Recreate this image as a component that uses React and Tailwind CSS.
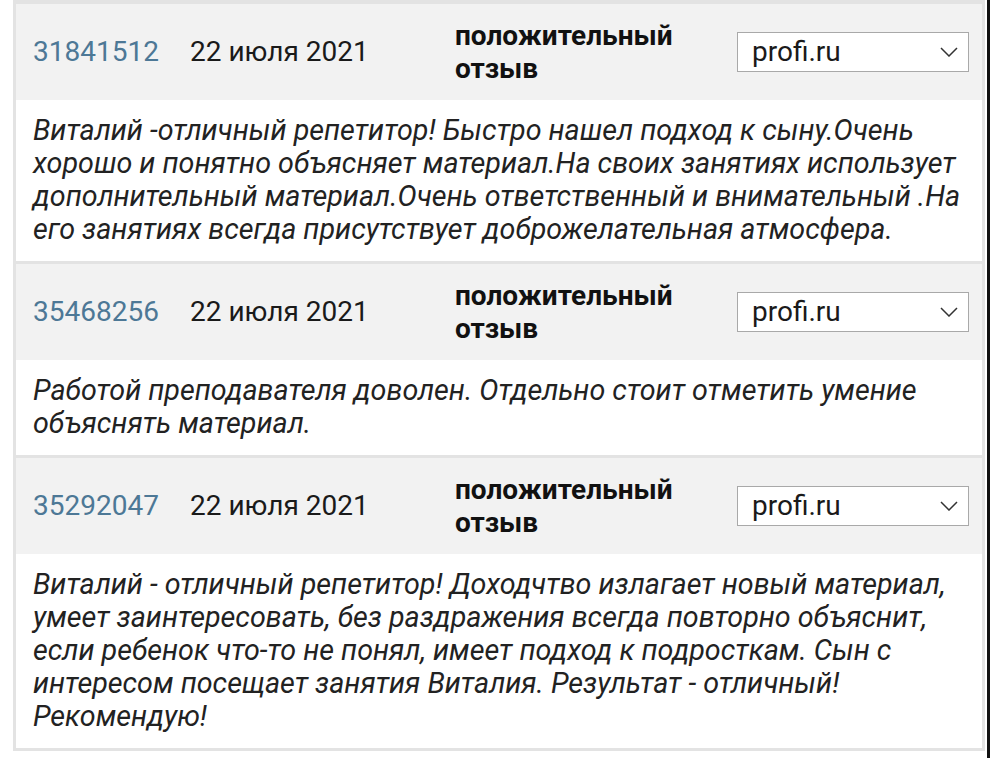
import React from "react";

const reviews = [
  {
    id: "31841512",
    date: "22 июля 2021",
    lines: [
      "Виталий -отличный репетитор! Быстро нашел подход к сыну.Очень",
      "хорошо и понятно объясняет материал.На своих занятиях использует",
      "дополнительный материал.Очень ответственный и внимательный .На",
      "его занятиях всегда присутствует доброжелательная атмосфера.",
    ],
  },
  {
    id: "35468256",
    date: "22 июля 2021",
    lines: [
      "Работой преподавателя доволен. Отдельно стоит отметить умение",
      "объяснять материал.",
    ],
  },
  {
    id: "35292047",
    date: "22 июля 2021",
    lines: [
      "Виталий - отличный репетитор! Доходчтво излагает новый материал,",
      "умеет заинтересовать, без раздражения всегда повторно объяснит,",
      "если ребенок что-то не понял, имеет подход к подросткам. Сын с",
      "интересом посещает занятия Виталия. Результат - отличный!",
      "Рекомендую!",
    ],
  },
];

const Chevron = () => (
  <svg width="18" height="10" viewBox="0 0 18 10" fill="none" stroke="#333" strokeWidth="1.5">
    <path d="M1 1l8 8 8-8" />
  </svg>
);

const ReviewRow = ({ review }) => (
  <div className="border-b-[3px] border-[#e3e3e3]">
    <div className="flex items-center h-[96px] bg-[#f2f2f2] pl-[17px]">
      <span className="w-[157px] text-[28px] text-[#4d7896]">{review.id}</span>
      <span className="w-[265px] text-[28px] text-[#1a1a1a]">{review.date}</span>
      <div className="w-[282px] text-[28px] leading-[33px] font-bold text-[#111]">
        положительный
        <br />
        отзыв
      </div>
      <div className="flex items-center justify-between w-[232px] h-[40px] bg-white border border-[#a9a9a9] pl-[14px] pr-[10px]">
        <span className="text-[28px] text-[#1a1a1a]">profi.ru</span>
        <Chevron />
      </div>
    </div>
    <div className="bg-white pl-[17px] pt-[14px] pb-[15px] text-[28.7px] leading-[33px] italic text-[#222]">
      {review.lines.map((line, i) => (
        <div key={i} className="whitespace-nowrap">{line}</div>
      ))}
    </div>
  </div>
);

export default function App() {
  return (
    <div className="w-[990px] h-[758px] bg-white overflow-hidden flex font-['Roboto',sans-serif]">
      <div className="w-[13px] shrink-0" />
      <div className="w-[972px] shrink-0 border-l-[3px] border-r-[3px] border-[#e3e3e3] border-t-[4px] self-start">
        {reviews.map((r) => (
          <ReviewRow key={r.id} review={r} />
        ))}
      </div>
      <div className="w-[2px] shrink-0" />
      <div className="flex-1 bg-[#111]" />
    </div>
  );
}
